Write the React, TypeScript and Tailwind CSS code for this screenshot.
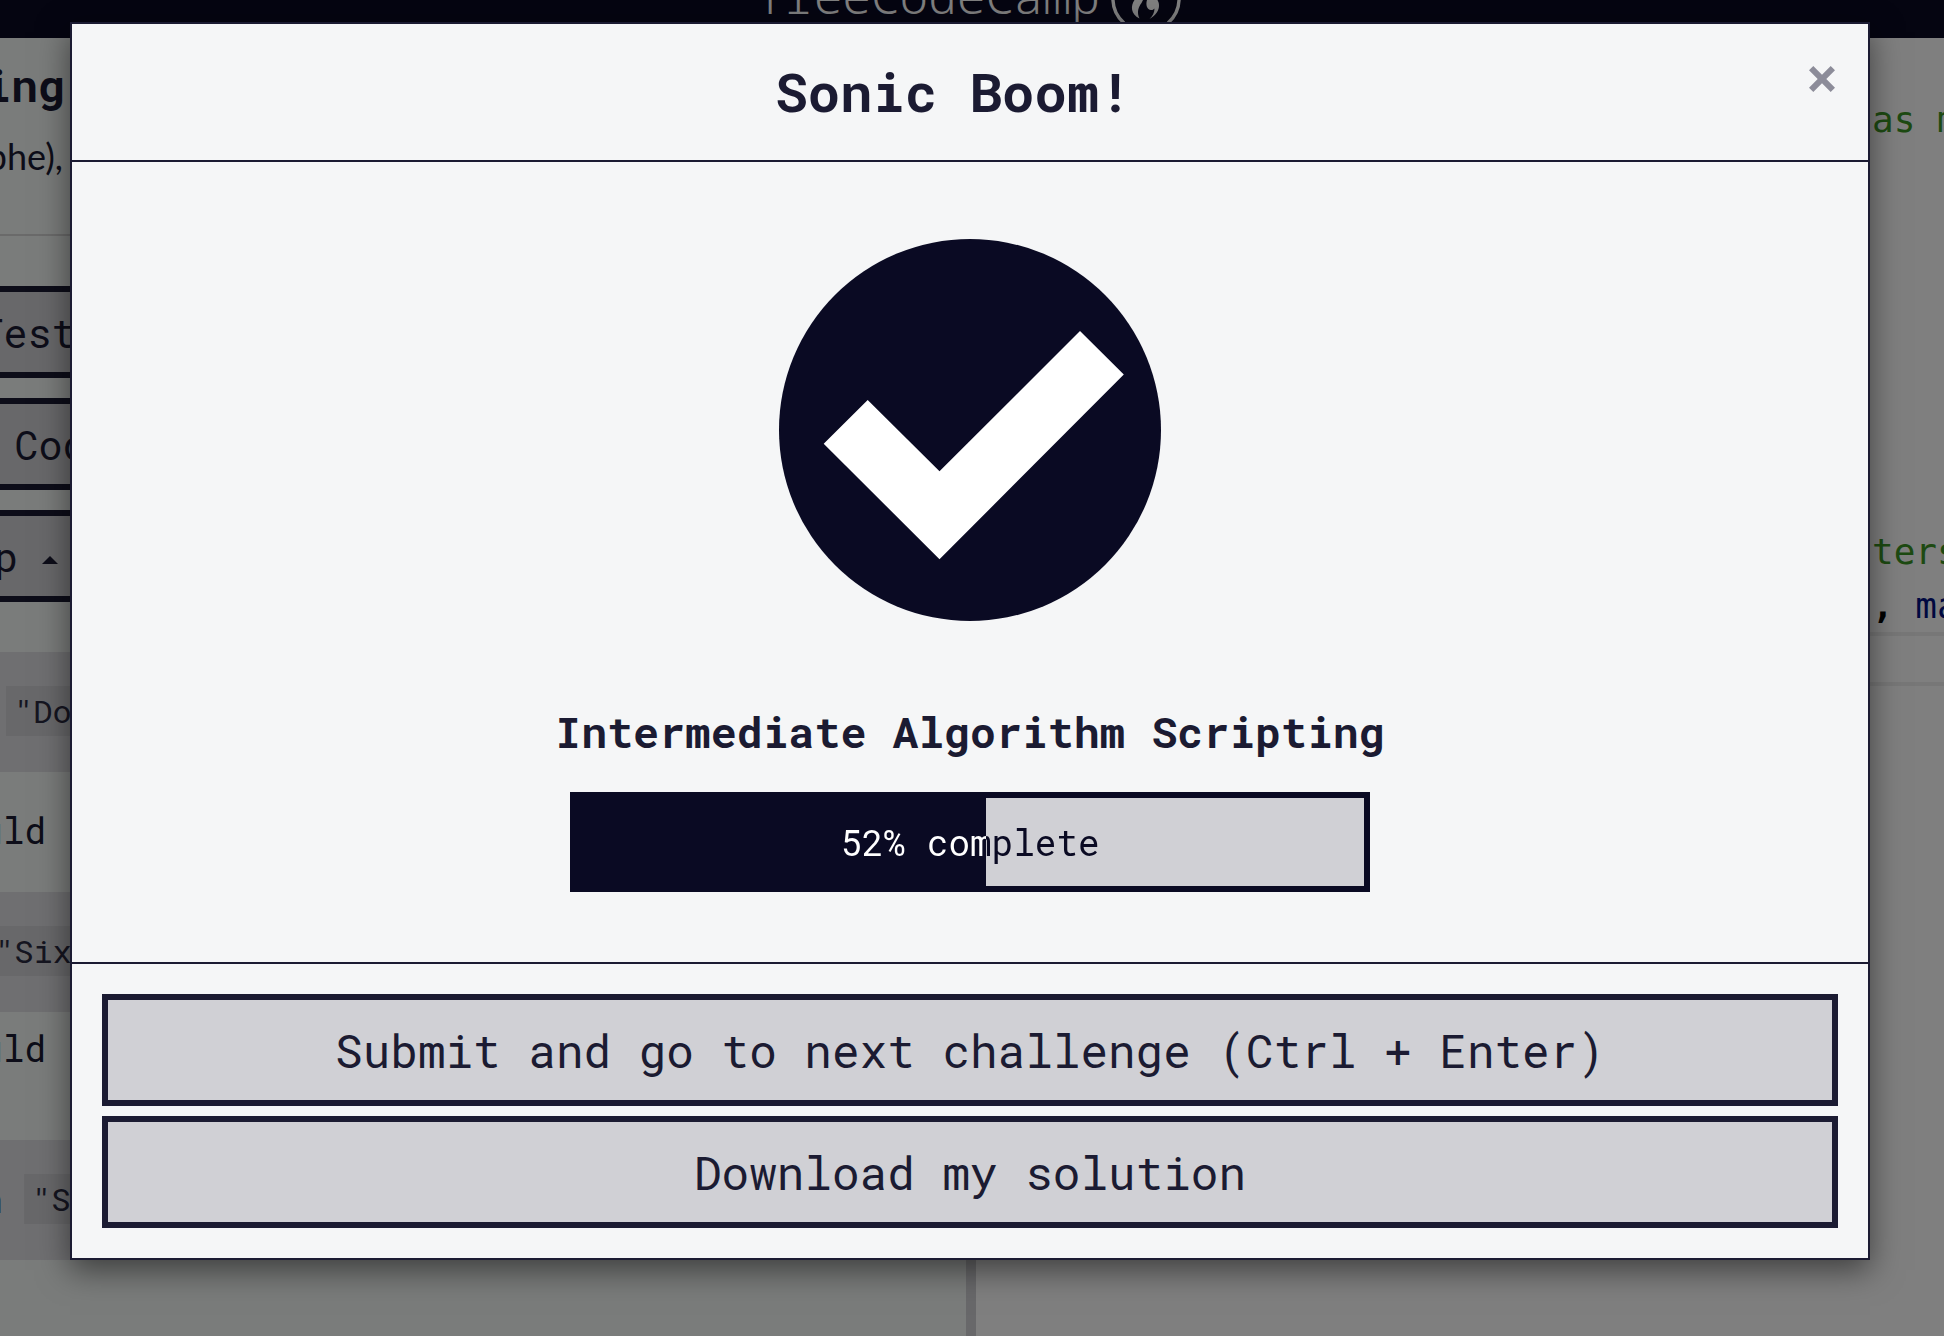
import type { ReactNode } from "react";

function Logo() {
  return (
    <div className="flex h-[38px] items-start overflow-hidden bg-[#0a0a23] pl-[756.5px] text-white">
      <span className="-mt-[36px] font-['Noto_Sans_Mono','DejaVu_Sans_Mono',monospace] text-[47.7px] leading-[64px] font-[350]">
        freeCodeCamp
      </span>
      <svg className="ml-[8.5px] h-[24px] w-[74px] shrink-0" viewBox="1108 0 74 24" fill="currentColor">
        <path d="M1113 -4C1112.4 6 1116 16 1124 23" fill="none" stroke="currentColor" strokeWidth="3.4" />
        <path d="M1179 -4C1179.6 6 1176 16 1168 23" fill="none" stroke="currentColor" strokeWidth="3.4" />
        <path d="M1134.500 0C1130.500 6 1130.500 14 1139.500 18.500C1136.500 12 1138.500 7 1141.500 3L1143 0Z" />
        <path d="M1147 0C1145.500 5 1147 9.500 1151 10C1152.500 10.200 1153.800 9.500 1154.500 8.500C1154.500 13 1152.500 16 1149.500 19C1156 15.500 1159.300 10 1159 5C1158.900 3 1158.300 1.500 1157.500 0Z" />
      </svg>
    </div>
  );
}

function ToolButton({ children }: { children: ReactNode }) {
  return (
    <div className="mb-5 flex h-[92px] items-center border-y-[6px] border-[#1b1b32] bg-[#d0d0d5] pt-[2px] text-[40px] whitespace-pre">
      {children}
    </div>
  );
}

function Chip({ children }: { children: ReactNode }) {
  return (
    <code className="flex h-[50px] items-center bg-[#d0d0d5] px-2 font-['Roboto_Mono',monospace] text-[32px] text-[#2a2a40] whitespace-pre">
      {children}
    </code>
  );
}

function Instructions() {
  return (
    <section className="w-[966px] shrink-0 bg-[#f5f8f6] pt-3 text-[#1b1b32]">
      <h1 className="flex h-[68px] w-[65px] items-center justify-end pt-[2px] text-[45px] font-bold">Missing</h1>
      <p className="flex h-[76px] w-[63px] items-center justify-end font-['Lato',sans-serif] text-[36px]">
        (apostrophe),
      </p>
      <hr className="mt-10 mb-[50px] h-[2px] border-0 bg-[#d5d5d5]" />
      <ToolButton>
        <span className="-ml-[20.5px]">Tests (Ctrl + Enter)</span>
      </ToolButton>
      <ToolButton>
        <span className="ml-[14.5px]">Code</span>
      </ToolButton>
      <ToolButton>
        <span className="flex w-[18px] justify-end">Help</span>
        <svg className="mt-[6px] ml-6 h-2 w-4" viewBox="0 0 16 8" fill="currentColor">
          <path d="M0 8L8 0L16 8Z" />
        </svg>
      </ToolButton>
      <div className="mt-[50px] text-[36px]">
        <div className="flex h-[120px] bg-[#dfdfe2] pt-[34px] pl-[6px]">
          <Chip>"Don't</Chip>
        </div>
        <div className="h-[120px] pt-[33px]">
          <p className="flex h-[50px] w-[46px] items-center justify-end">should</p>
        </div>
        <div className="flex h-[120px] bg-[#dfdfe2] pt-[34px]">
          <div className="-ml-[13px]">
            <Chip>"Sixty</Chip>
          </div>
        </div>
        <div className="h-[128px] pt-[11px]">
          <p className="flex h-[50px] w-[46px] items-center justify-end">should</p>
        </div>
        <div className="flex h-[120px] bg-[#dfdfe2] pt-[34px]">
          <p className="mr-[21px] flex h-[50px] w-[3px] items-center justify-end">return</p>
          <Chip>"Schin</Chip>
        </div>
      </div>
    </section>
  );
}

function Editor() {
  return (
    <section className="min-w-0 grow overflow-hidden bg-white pt-[55px] font-['DejaVu_Sans_Mono',monospace] text-[36px] leading-[54px] whitespace-pre text-[#001080]">
      <p className="mb-[378px] pl-[896px] text-[#3a9424]">as many</p>
      <p className="pl-[896px] text-[#3a9424]">ters</p>
      <p className="-mb-px pl-[896px]">
        <span className="font-bold text-black">,</span> max
      </p>
      <div className="h-[54px] border-y-4 border-[#eeeeee]" />
    </section>
  );
}

function ActionButton({ children }: { children: ReactNode }) {
  return (
    <button className="flex h-[112px] items-center justify-center border-[6px] border-[#1b1b32] bg-[#d0d0d5] text-[46px]">
      {children}
    </button>
  );
}

function Modal() {
  return (
    <div className="flex h-[1238px] w-[1800px] flex-col border-2 border-[#1b1b32] bg-[#f5f6f7] text-[#1b1b32] shadow-[0_10px_30px_rgba(0,0,0,0.5)]">
      <header className="relative flex h-[138px] items-center justify-center border-b-2 border-[#1b1b32] pr-[33px] pb-[2px]">
        <h2 className="text-[54px] font-bold">Sonic Boom!</h2>
        <button aria-label="Close" className="absolute top-[42px] right-[33px] text-[#8c8c99]">
          <svg className="h-[26px] w-[26px]" viewBox="0 0 26 26" fill="currentColor">
            <path d="M0 4.300L4.300 0L13 8.700L21.700 0L26 4.300L17.300 13L26 21.700L21.700 26L13 17.300L4.300 26L0 21.700L8.700 13Z" />
          </svg>
        </button>
      </header>
      <div className="flex grow flex-col items-center pt-[77px]">
        <svg className="h-[382px] w-[382px]" viewBox="0 0 382 382">
          <circle cx="191" cy="191" r="191" fill="#0a0a23" />
          <path d="M44.700 204.700L88.700 161L160.500 232.300L301 92L344.800 135.500L160.500 320.300Z" fill="#fff" />
        </svg>
        <h3 className="mt-[81px] text-[43.2px] leading-[60px] font-bold">Intermediate Algorithm Scripting</h3>
        <div className="mt-[30px] h-[100px] w-[800px] border-[6px] border-[#0a0a23] bg-[linear-gradient(90deg,#0a0a23_52%,#d0d0d5_52%)] bg-origin-padding">
          <span className="block bg-[linear-gradient(90deg,#ffffff_52%,#0a0a23_52%)] bg-clip-text text-center text-[36px] leading-[88px] text-transparent">
            52% complete
          </span>
        </div>
      </div>
      <footer className="flex flex-col gap-[10px] border-t-2 border-[#1b1b32] px-[30px] py-[30px]">
        <ActionButton>Submit and go to next challenge (Ctrl + Enter)</ActionButton>
        <ActionButton>Download my solution</ActionButton>
      </footer>
    </div>
  );
}

export default function App() {
  return (
    <main className="relative h-[1336px] w-[1944px] overflow-hidden font-['Roboto_Mono',monospace]">
      <div className="flex h-full flex-col">
        <Logo />
        <div className="flex grow">
          <Instructions />
          <div className="w-[10px] shrink-0 bg-[#d0d0d5]" />
          <Editor />
        </div>
      </div>
      <div className="absolute inset-0 flex items-start bg-black/50 pt-[22px] pl-[70px]">
        <Modal />
      </div>
    </main>
  );
}
